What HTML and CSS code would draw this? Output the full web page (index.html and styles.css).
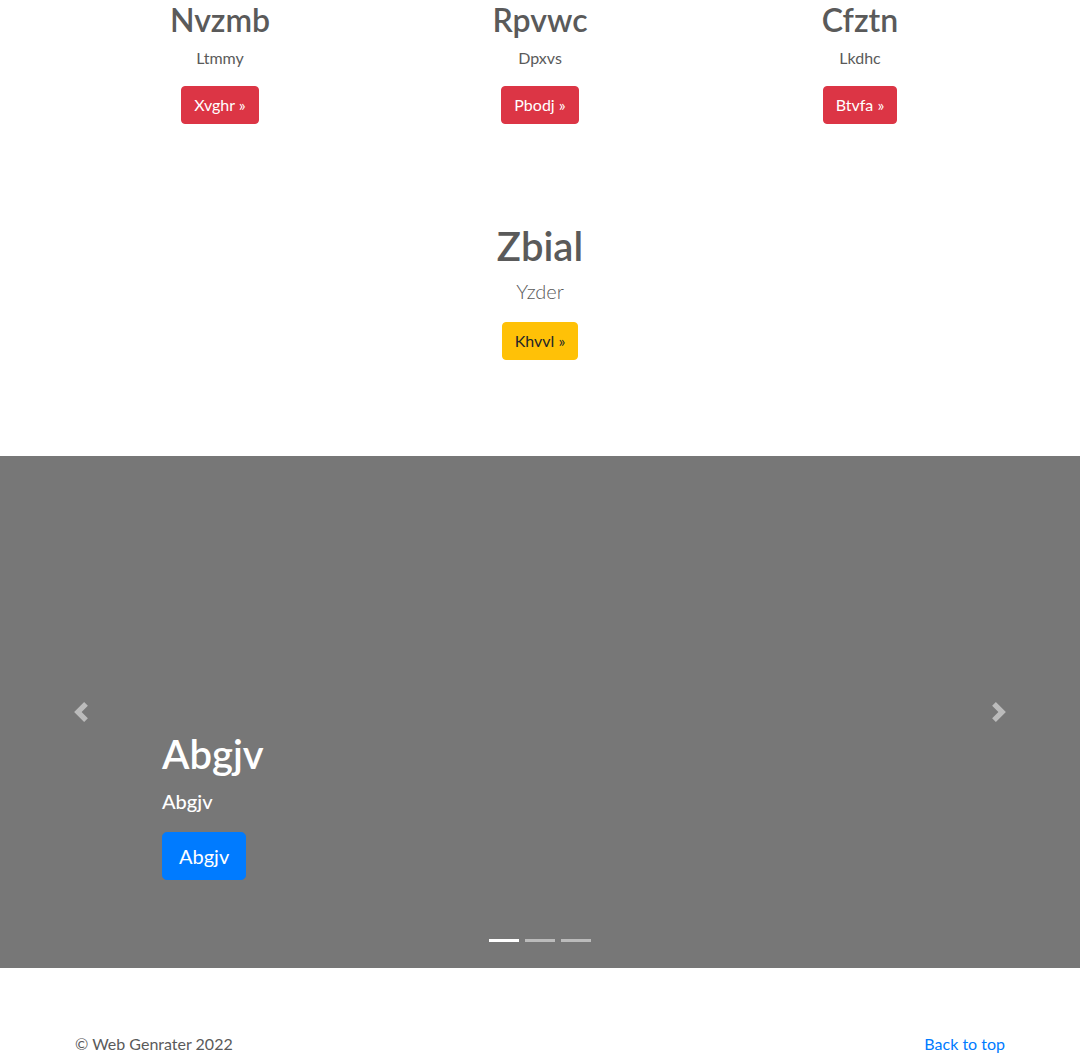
FILE: index.html
```html
<!DOCTYPE html>
<html lang="en">
<head>
<meta charset="utf-8">
<title>Carousel</title>
<link rel="stylesheet" href="styles.css">
</head>
<body>
<main>
  <div class="container marketing">
    <div class="row">
      <div class="col">
        <h2>Nvzmb</h2>
        <p>Ltmmy</p>
        <p><a class="btn btn-danger" href="#">Xvghr &raquo;</a></p>
      </div>
      <div class="col">
        <h2>Rpvwc</h2>
        <p>Dpxvs</p>
        <p><a class="btn btn-danger" href="#">Pbodj &raquo;</a></p>
      </div>
      <div class="col">
        <h2>Cfztn</h2>
        <p>Lkdhc</p>
        <p><a class="btn btn-danger" href="#">Btvfa &raquo;</a></p>
      </div>
    </div>
    <div class="feature">
      <h1>Zbial</h1>
      <p class="lead">Yzder</p>
      <p><a class="btn btn-warning" href="#">Khvvl &raquo;</a></p>
    </div>
  </div>

  <div class="carousel">
    <ol class="indicators">
      <li class="active"></li>
      <li></li>
      <li></li>
    </ol>
    <div class="caption">
      <h1>Abgjv</h1>
      <p class="cap-text">Abgjv</p>
      <p class="cap-action"><a class="btn btn-lg btn-primary" href="#">Abgjv</a></p>
    </div>
    <a class="control prev" href="#">
      <svg width="20" height="20" viewBox="0 0 8 8" fill="#fff"><path d="M5.25 0l-4 4 4 4 1.5-1.5L4.25 4l2.5-2.5L5.25 0z"/></svg>
    </a>
    <a class="control next" href="#">
      <svg width="20" height="20" viewBox="0 0 8 8" fill="#fff"><path d="M2.75 0l-1.5 1.5L3.75 4l-2.5 2.5L2.75 8l4-4-4-4z"/></svg>
    </a>
  </div>

  <footer class="container footer">
    <p>&copy; Web Genrater 2022</p>
    <p><a href="#">Back to top</a></p>
  </footer>
</main>
</body>
</html>
```

FILE: styles.css
```css
* { box-sizing: border-box; }
html, body { margin: 0; padding: 0; }
body {
  font-family: Lato, "Open Sans", sans-serif;
  font-size: 16px;
  line-height: 1.5;
  color: #5a5a5a;
  background: #fff;
  overflow: hidden;
}
a { text-decoration: none; color: #007bff; }
p { margin: 0 0 16px; }
h1, h2 { margin: 0 0 8px; font-weight: 600; line-height: 1.2; }
h1 { font-size: 40px; }
h2 { font-size: 32px; }
.marketing h2 { margin-top: 1px; margin-bottom: 7px; }

.container {
  width: 960px;
  margin: 0 auto;
  padding: 0 15px;
}
.row {
  display: flex;
  margin: 0 -15px;
}
.col {
  flex: 1 1 0;
  padding: 0 15px;
  text-align: center;
}
.col p { margin-left: 12px; margin-right: 12px; }

.btn {
  display: inline-block;
  font-size: 16px;
  line-height: 1.5;
  padding: 6px 12px;
  border: 1px solid transparent;
  border-radius: 4px;
  font-weight: 400;
}
.btn-danger { background: #dc3545; border-color: #dc3545; color: #fff; }
.btn-warning { background: #ffc107; border-color: #ffc107; color: #212529; }
.btn-primary { background: #007bff; border-color: #007bff; color: #fff; }
.btn-lg { font-size: 20px; padding: 8px 16px; border-radius: 4.8px; }

.feature {
  text-align: center;
  margin-top: 82px;
  margin-bottom: 96px;
}
.feature h1 { margin-bottom: 6px; }
.lead { font-size: 20px; font-weight: 300; margin-bottom: 16px; }

.carousel {
  position: relative;
  height: 512px;
  background: #777;
  margin-bottom: 64px;
}
.caption {
  position: absolute;
  left: 15%;
  right: 15%;
  bottom: 48px;
  padding: 20px 0;
  color: #fff;
  text-align: left;
  z-index: 10;
}
.caption h1 { color: #fff; }
.cap-text { font-size: 20px; font-weight: 500; }
.cap-action { margin-bottom: 20px; }
.control {
  position: absolute;
  top: 0;
  bottom: 0;
  width: 15%;
  display: flex;
  align-items: center;
  justify-content: center;
  opacity: .5;
}
.control svg { display: block; }
.prev { left: 0; }
.next { right: 0; }
.indicators {
  position: absolute;
  left: 0;
  right: 0;
  bottom: 0;
  margin: 0 15% 16px;
  padding: 0;
  list-style: none;
  display: flex;
  justify-content: center;
  z-index: 15;
}
.indicators li {
  width: 30px;
  height: 3px;
  margin: 0 3px;
  background: #fff;
  opacity: .5;
  box-sizing: content-box;
  border-top: 10px solid transparent;
  border-bottom: 10px solid transparent;
  background-clip: padding-box;
}
.indicators li.active { opacity: 1; }

.footer {
  display: flex;
  justify-content: space-between;
}
```
